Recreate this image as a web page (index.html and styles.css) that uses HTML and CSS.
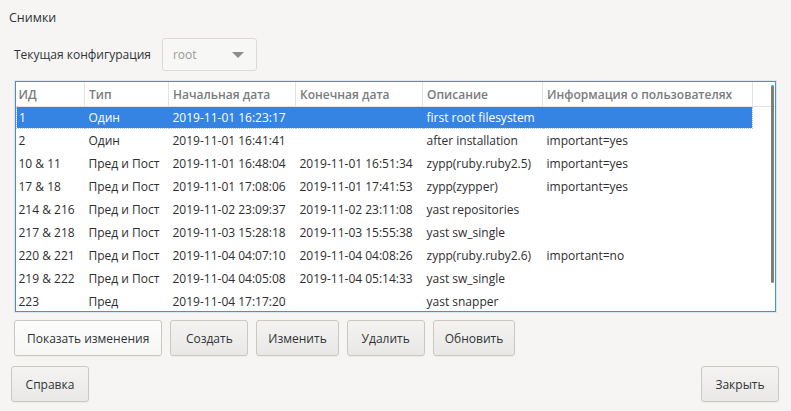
FILE: index.html
```html
<!DOCTYPE html>
<html lang="ru">
<head>
  <meta charset="UTF-8">
  <title>Снимки</title>
  <link rel="stylesheet" href="styles.css">
</head>
<body>
  <div class="window">
    <div class="title">Снимки</div>

    <div class="config-row">
      <span class="config-label">Текущая конфигурация</span>
      <div class="combo">
        <span>root</span>
        <span class="combo-arrow"></span>
      </div>
    </div>

    <!-- Список снимков -->
    <div class="table-frame">
      <table class="snapshots">
        <colgroup>
          <col class="c-id"><col class="c-type"><col class="c-date"><col class="c-date"><col class="c-desc"><col class="c-info"><col>
        </colgroup>
        <thead>
          <tr>
            <th>ИД</th><th>Тип</th><th>Начальная дата</th><th>Конечная дата</th><th>Описание</th><th>Информация о пользователях</th><th class="filler"></th>
          </tr>
        </thead>
        <tbody>
          <tr class="selected"><td>1</td><td>Один</td><td>2019-11-01 16:23:17</td><td></td><td>first root filesystem</td><td></td><td class="filler"></td></tr>
          <tr><td>2</td><td>Один</td><td>2019-11-01 16:41:41</td><td></td><td>after installation</td><td>important=yes</td><td class="filler"></td></tr>
          <tr><td>10 &amp; 11</td><td>Пред и Пост</td><td>2019-11-01 16:48:04</td><td>2019-11-01 16:51:34</td><td>zypp(ruby.ruby2.5)</td><td>important=yes</td><td class="filler"></td></tr>
          <tr><td>17 &amp; 18</td><td>Пред и Пост</td><td>2019-11-01 17:08:06</td><td>2019-11-01 17:41:53</td><td>zypp(zypper)</td><td>important=yes</td><td class="filler"></td></tr>
          <tr><td>214 &amp; 216</td><td>Пред и Пост</td><td>2019-11-02 23:09:37</td><td>2019-11-02 23:11:08</td><td>yast repositories</td><td></td><td class="filler"></td></tr>
          <tr><td>217 &amp; 218</td><td>Пред и Пост</td><td>2019-11-03 15:28:18</td><td>2019-11-03 15:55:38</td><td>yast sw_single</td><td></td><td class="filler"></td></tr>
          <tr><td>220 &amp; 221</td><td>Пред и Пост</td><td>2019-11-04 04:07:10</td><td>2019-11-04 04:08:26</td><td>zypp(ruby.ruby2.6)</td><td>important=no</td><td class="filler"></td></tr>
          <tr><td>219 &amp; 222</td><td>Пред и Пост</td><td>2019-11-04 04:05:08</td><td>2019-11-04 05:14:33</td><td>yast sw_single</td><td></td><td class="filler"></td></tr>
          <tr><td>223</td><td>Пред</td><td>2019-11-04 17:17:20</td><td></td><td>yast snapper</td><td></td><td class="filler"></td></tr>
        </tbody>
      </table>
      <div class="scrollbar"></div>
    </div>

    <div class="actions">
      <button class="btn btn-default">Показать изменения</button>
      <button class="btn">Создать</button>
      <button class="btn">Изменить</button>
      <button class="btn">Удалить</button>
      <button class="btn">Обновить</button>
    </div>

    <div class="footer">
      <button class="btn">Справка</button>
      <button class="btn">Закрыть</button>
    </div>
  </div>
</body>
</html>
```

FILE: styles.css
```css
body {
  margin: 0;
  padding: 0;
  background-color: #f6f5f4;
  color: #2e3436;
  font-family: "Open Sans", "Noto Sans", sans-serif;
  font-size: 12px;
}

.window {
  width: 791px;
  height: 411px;
  box-sizing: border-box;
  padding-top: 9px;
}

.title {
  margin-left: 9px;
  line-height: 18px;
  font-size: 12.5px;
}

.config-row {
  display: flex;
  align-items: center;
  margin: 11px 0 0 14px;
  gap: 11px;
}

.combo {
  width: 95px;
  height: 33px;
  box-sizing: border-box;
  border: 1px solid #dcdad7;
  border-radius: 3px;
  background-color: #f7f7f6;
  color: #9a9a98;
  display: flex;
  align-items: center;
  justify-content: space-between;
  padding: 0 12px 0 10px;
}

.combo-arrow {
  width: 0;
  height: 0;
  border-left: 6px solid transparent;
  border-right: 6px solid transparent;
  border-top: 6px solid #8b8e8f;
}

/* Таблица снимков */
.table-frame {
  position: relative;
  margin: 10px 0 0 15px;
  width: 761px;
  height: 231px;
  box-sizing: border-box;
  border: 1px solid #4a90d9;
  background-color: #fff;
  overflow: hidden;
  box-shadow: 0 0 0 1px #d9e6f3;
}

.snapshots {
  border-collapse: collapse;
  table-layout: fixed;
  width: 100%;
}

.c-id { width: 68px; }
.c-type { width: 84px; }
.c-date { width: 127px; }
.c-desc { width: 120px; }
.c-info { width: 210px; }

.snapshots th,
.snapshots td {
  text-align: left;
  white-space: nowrap;
  padding: 0 0 0 4px;
  overflow: hidden;
}

.snapshots th {
  height: 24px;
  color: #7a7c7c;
  font-weight: 600;
  border-right: 1px solid #e3e3e3;
  border-bottom: 1px solid #e3e3e3;
}

.snapshots th:first-child,
.snapshots td:first-child {
  padding-left: 2px;
}

.snapshots th.filler {
  border-right: none;
}

.snapshots td {
  height: 23px;
  color: #2e2e2e;
}

.snapshots tr.selected td {
  background-color: #3584e4;
  color: #fff;
  border-top: 1px dotted #a9c9f0;
  border-bottom: 1px dotted #a9c9f0;
  height: 21px;
}

.snapshots tr.selected td:first-child {
  border-left: 1px dotted #a9c9f0;
}

.snapshots tr.selected td:nth-child(6) {
  border-right: 1px dotted #a9c9f0;
}

.snapshots tr.selected td.filler {
  background-color: #fff;
  border: none;
}

.scrollbar {
  position: absolute;
  top: 3px;
  right: 1px;
  width: 3px;
  height: 198px;
  border-radius: 2px;
  background-color: #7e7e7e;
}

/* Кнопки */
.btn {
  font-family: "Open Sans", "Noto Sans", sans-serif;
  font-size: 12px;
  color: #2e3436;
  height: 36px;
  min-width: 78px;
  padding: 0 11px;
  border: 1px solid #cdc7c2;
  border-radius: 3px;
  background: linear-gradient(#f4f3f2, #e9e8e6);
  box-shadow: 0 1px 0 rgba(0, 0, 0, 0.04);
}

.btn-default {
  padding: 0 12px;
  background: linear-gradient(#fdfdfd, #f6f6f5);
}

.actions {
  display: flex;
  gap: 8px;
  margin: 8px 0 0 14px;
}

.footer {
  display: flex;
  justify-content: space-between;
  margin: 10px 12px 0 11px;
}
```
